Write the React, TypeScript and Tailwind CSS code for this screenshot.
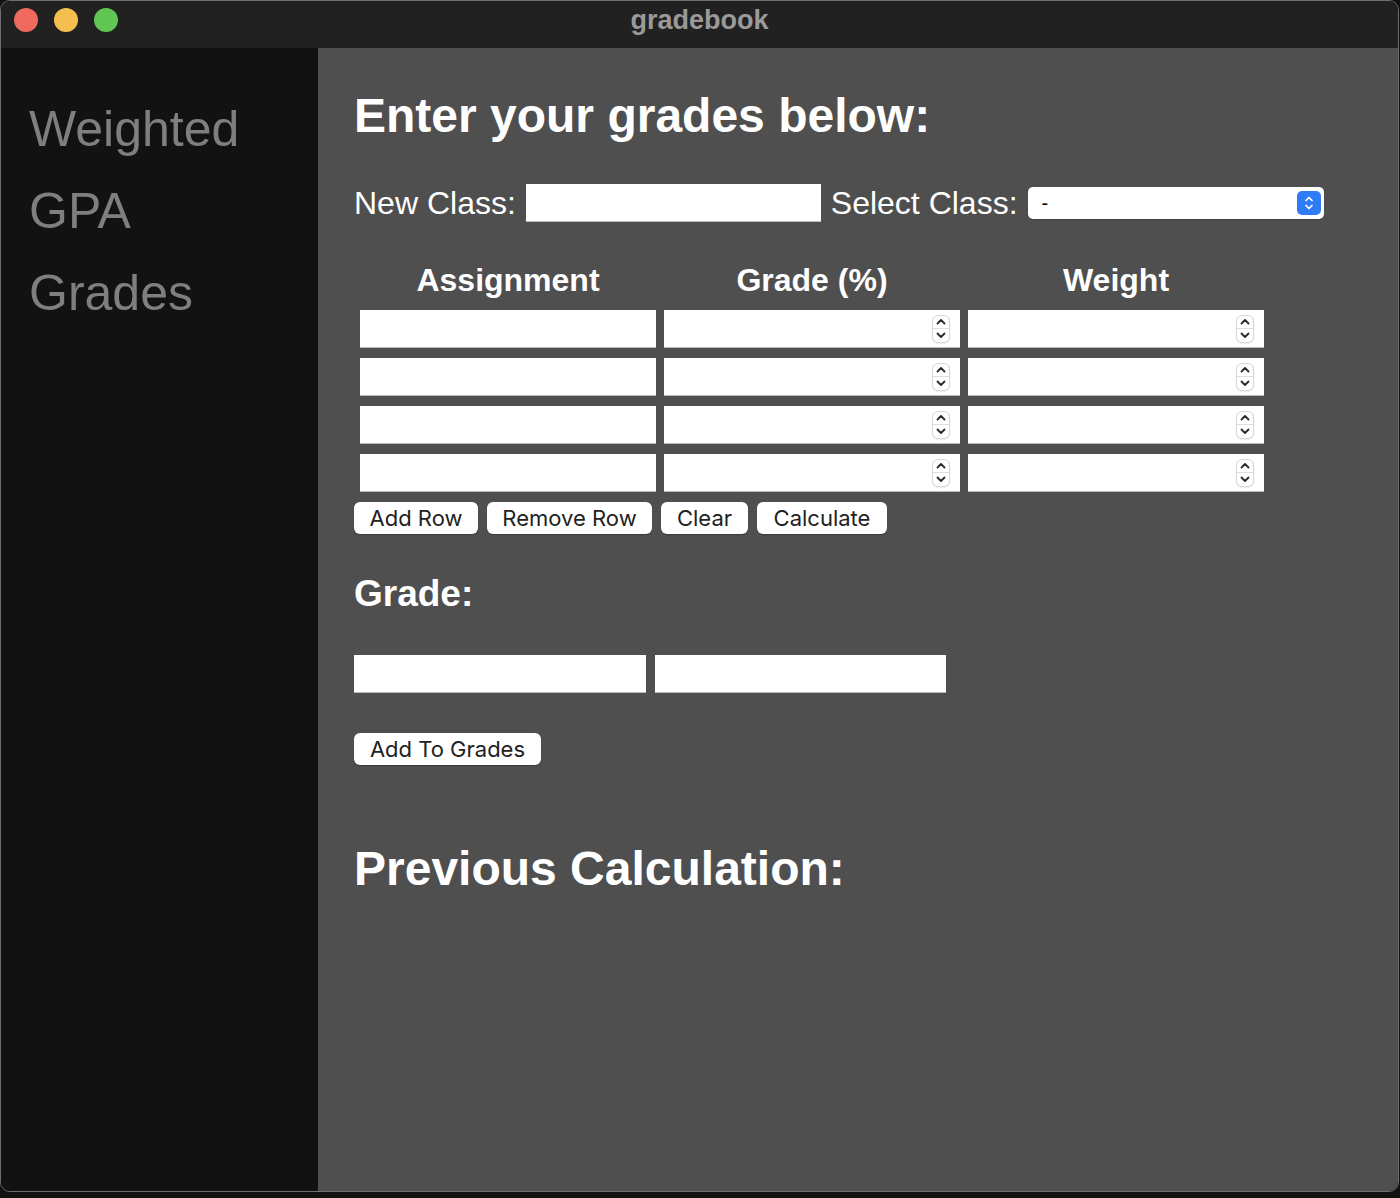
import React from "react";

const sans = { fontFamily: '"Liberation Sans", Arial, sans-serif' };

function Spinner() {
  return (
    <div className="absolute right-[10px] top-1/2 -translate-y-1/2 w-[18px] h-[28px] rounded-[6px] border border-[#d6d6d6] bg-white flex flex-col shadow-[0_1px_1px_rgba(0,0,0,0.08)]">
      <div className="flex-1 flex items-center justify-center border-b border-[#dedede]">
        <svg width="10" height="7" viewBox="0 0 10 7">
          <path d="M1.5 5.5 L5 2 L8.5 5.5" fill="none" stroke="#2a2a2a" strokeWidth="1.8" strokeLinecap="round" strokeLinejoin="round" />
        </svg>
      </div>
      <div className="flex-1 flex items-center justify-center">
        <svg width="10" height="7" viewBox="0 0 10 7">
          <path d="M1.5 1.5 L5 5 L8.5 1.5" fill="none" stroke="#2a2a2a" strokeWidth="1.8" strokeLinecap="round" strokeLinejoin="round" />
        </svg>
      </div>
    </div>
  );
}

function TextBox({ className = "" }: { className?: string }) {
  return <div className={`h-[38px] bg-white border-b border-[#bdbdbd] ${className}`} />;
}

function NumberBox() {
  return (
    <div className="relative h-[38px] bg-white border-b border-[#bdbdbd]">
      <Spinner />
    </div>
  );
}

function Btn({ label, w }: { label: string; w: string }) {
  return (
    <button
      className={`${w} h-[32px] rounded-[6px] bg-white text-[#222] text-[22px] flex items-center justify-center shadow-[0_1px_1px_rgba(0,0,0,0.25)]`}
      style={{ fontFamily: 'Inter, "Liberation Sans", sans-serif' }}
    >
      {label}
    </button>
  );
}

export default function App() {
  const rows = [0, 1, 2, 3];
  return (
    <div className="w-[1400px] h-[1198px] bg-[#111111]" style={sans}>
      <div className="w-[1399px] h-[1192px] rounded-[10px] overflow-hidden border border-[#6e6e6e] flex flex-col">
        {/* title bar */}
        <div className="h-[47px] bg-[#222121] relative">
          <div className="flex gap-[16px] pl-[13px] pt-[7px]">
            <span className="w-[24px] h-[24px] rounded-full bg-[#ee6a5f]" />
            <span className="w-[24px] h-[24px] rounded-full bg-[#f5bf4f]" />
            <span className="w-[24px] h-[24px] rounded-full bg-[#61c554]" />
          </div>
          <div className="absolute inset-x-0 top-[3px] flex justify-center pointer-events-none">
            <span className="text-[27px] leading-[32px] font-bold text-[#9a9a9a]">gradebook</span>
          </div>
        </div>

        <div className="flex flex-1">
          {/* sidebar */}
          <div className="w-[317px] bg-[#121212] pt-[40px] pl-[28px] flex flex-col">
            {["Weighted", "GPA", "Grades"].map((t) => (
              <span key={t} className="text-[50px] leading-[82px] text-[#7f7f7f]">
                {t}
              </span>
            ))}
          </div>

          {/* main */}
          <div className="flex-1 bg-[#4f4f4f] pt-[40px] pl-[36px] text-white">
            <h1 className="text-[48px] leading-[56px] font-bold">Enter your grades below:</h1>

            <div className="mt-[40px] flex items-center gap-[10px] h-[38px]">
              <span className="text-[32px] leading-[36px]">New Class:</span>
              <TextBox className="w-[295px]" />
              <span className="text-[32px] leading-[36px]">Select Class:</span>
              <div className="w-[296px] h-[32px] bg-white rounded-[5px] flex items-center justify-between pl-[14px] pr-[3px] shadow-[0_1px_1px_rgba(0,0,0,0.2)]">
                <span className="text-black text-[20px]">-</span>
                <div className="w-[24px] h-[24px] rounded-[5px] bg-[#2f7cf6] flex flex-col items-center justify-center gap-[2px]">
                  <svg width="10" height="6" viewBox="0 0 10 6">
                    <path d="M2 4.5 L5 1.5 L8 4.5" fill="none" stroke="white" strokeWidth="1.7" strokeLinecap="round" strokeLinejoin="round" />
                  </svg>
                  <svg width="10" height="6" viewBox="0 0 10 6">
                    <path d="M2 1.5 L5 4.5 L8 1.5" fill="none" stroke="white" strokeWidth="1.7" strokeLinecap="round" strokeLinejoin="round" />
                  </svg>
                </div>
              </div>
            </div>

            <div className="mt-[39px] ml-[6px] w-[904px] grid grid-cols-[296px_296px_296px] gap-x-[8px] gap-y-[10px]">
              <div className="text-[32px] leading-[38px] font-bold text-center mb-[1px]">Assignment</div>
              <div className="text-[32px] leading-[38px] font-bold text-center">Grade (%)</div>
              <div className="text-[32px] leading-[38px] font-bold text-center">Weight</div>
              {rows.map((r) => (
                <React.Fragment key={r}>
                  <TextBox />
                  <NumberBox />
                  <NumberBox />
                </React.Fragment>
              ))}
            </div>

            <div className="mt-[10px] flex gap-[9px]">
              <Btn label="Add Row" w="w-[124px]" />
              <Btn label="Remove Row" w="w-[165px]" />
              <Btn label="Clear" w="w-[87px]" />
              <Btn label="Calculate" w="w-[130px]" />
            </div>

            <h2 className="mt-[39px] text-[37px] leading-[42px] font-bold">Grade:</h2>

            <div className="mt-[40px] flex gap-[9px]">
              <TextBox className="w-[292px]" />
              <TextBox className="w-[291px]" />
            </div>

            <div className="mt-[40px]">
              <Btn label="Add To Grades" w="w-[187px]" />
            </div>

            <h1 className="mt-[76px] text-[48px] leading-[56px] font-bold">Previous Calculation:</h1>
          </div>
        </div>
      </div>
    </div>
  );
}
